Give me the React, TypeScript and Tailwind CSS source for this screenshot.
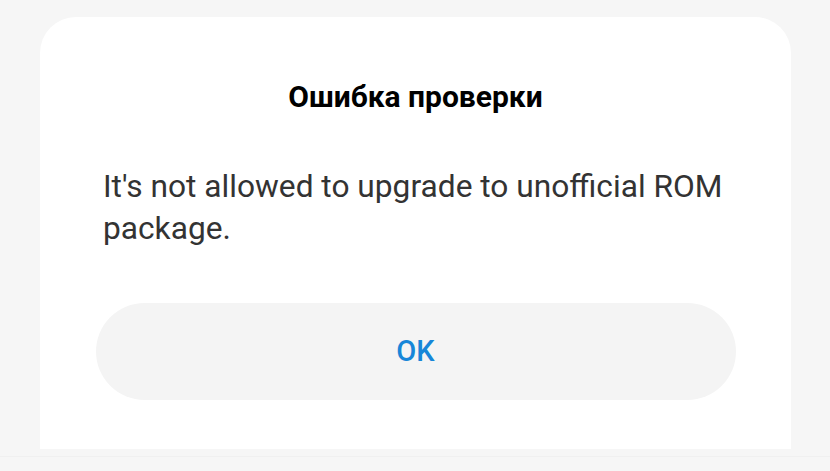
export default function App() {
  return (
    <div
      className="w-[830px] h-[471px] bg-[#f6f6f6] overflow-hidden flex flex-col"
      style={{ fontFamily: "Roboto, 'Noto Sans', sans-serif" }}
    >
      <div className="mt-[17px] mx-[40px] w-[751px] h-[432px] bg-white rounded-t-[36px] flex flex-col items-center">
        <div className="mt-[65px] text-[30px] leading-[30px] font-bold text-black">
          Ошибка проверки
        </div>
        <div className="self-stretch mt-[54px] px-[63px] text-[31.7px] leading-[42px] text-[#333333]">
          It's not allowed to upgrade to unofficial ROM package.
        </div>
        <div className="mt-[53px] w-[640px] h-[97px] rounded-full bg-[#f4f4f4] flex items-center justify-center text-[#1786d8] text-[29px] font-medium">
          OK
        </div>
      </div>
      <div className="mt-[7px] h-px bg-[#f0f0f0]" />
    </div>
  );
}
